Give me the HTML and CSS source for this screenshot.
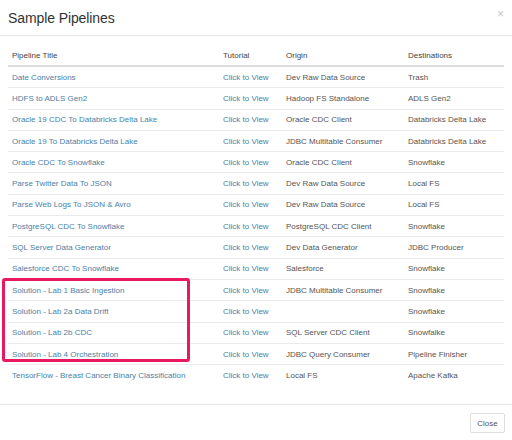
FILE: index.html
```html
<!DOCTYPE html>
<html>
<head>
<meta charset="utf-8">
<link rel="stylesheet" href="styles.css">
</head>
<body>
<div class="modal">
  <div class="modal-header">
    <h1 class="title">Sample Pipelines</h1>
    <span class="close-x">×</span>
  </div>
  <div class="modal-body">
    <table class="grid">
      <colgroup>
        <col class="c1"><col class="c2"><col class="c3"><col class="c4">
      </colgroup>
      <thead>
        <tr><th>Pipeline Title</th><th>Tutorial</th><th>Origin</th><th>Destinations</th></tr>
      </thead>
      <tbody>
        <tr><td class="link">Date Conversions</td><td class="link">Click to View</td><td>Dev Raw Data Source</td><td>Trash</td></tr>
        <tr><td class="link">HDFS to ADLS Gen2</td><td class="link">Click to View</td><td>Hadoop FS Standalone</td><td>ADLS Gen2</td></tr>
        <tr><td class="link">Oracle 19 CDC To Databricks Delta Lake</td><td class="link">Click to View</td><td>Oracle CDC Client</td><td>Databricks Delta Lake</td></tr>
        <tr><td class="link">Oracle 19 To Databricks Delta Lake</td><td class="link">Click to View</td><td>JDBC Multitable Consumer</td><td>Databricks Delta Lake</td></tr>
        <tr><td class="link">Oracle CDC To Snowflake</td><td class="link">Click to View</td><td>Oracle CDC Client</td><td>Snowflake</td></tr>
        <tr><td class="link">Parse Twitter Data To JSON</td><td class="link">Click to View</td><td>Dev Raw Data Source</td><td>Local FS</td></tr>
        <tr><td class="link">Parse Web Logs To JSON &amp; Avro</td><td class="link">Click to View</td><td>Dev Raw Data Source</td><td>Local FS</td></tr>
        <tr><td class="link">PostgreSQL CDC To Snowflake</td><td class="link">Click to View</td><td>PostgreSQL CDC Client</td><td>Snowflake</td></tr>
        <tr><td class="link">SQL Server Data Generator</td><td class="link">Click to View</td><td>Dev Data Generator</td><td>JDBC Producer</td></tr>
        <tr><td class="link">Salesforce CDC To Snowflake</td><td class="link">Click to View</td><td>Salesforce</td><td>Snowflake</td></tr>
        <tr><td class="link">Solution - Lab 1 Basic Ingestion</td><td class="link">Click to View</td><td>JDBC Multitable Consumer</td><td>Snowflake</td></tr>
        <tr><td class="link">Solution - Lab 2a Data Drift</td><td class="link">Click to View</td><td></td><td>Snowflake</td></tr>
        <tr><td class="link">Solution - Lab 2b CDC</td><td class="link">Click to View</td><td>SQL Server CDC Client</td><td>Snowfalke</td></tr>
        <tr><td class="link">Solution - Lab 4 Orchestration</td><td class="link">Click to View</td><td>JDBC Query Consumer</td><td>Pipeline Finisher</td></tr>
        <tr><td class="link">TensorFlow - Breast Cancer Binary Classification</td><td class="link">Click to View</td><td>Local FS</td><td>Apache Kafka</td></tr>
      </tbody>
    </table>
  </div>
  <div class="modal-footer">
    <button class="btn">Close</button>
  </div>
  <div class="highlight"></div>
</div>
</body>
</html>
```

FILE: styles.css
```css
html, body {
  margin: 0;
  padding: 0;
  background: #fff;
}
body {
  font-family: "Liberation Sans", Arial, Helvetica, sans-serif;
  color: #555;
}
.modal {
  position: relative;
  width: 512px;
  height: 440px;
  background: #fff;
}
.modal-header {
  height: 35px;
  border-bottom: 1px solid #e5e5e5;
  display: flex;
  align-items: center;
  justify-content: space-between;
  padding: 0 8px 0 8px;
}
.title {
  margin: 0;
  font-size: 14px;
  font-weight: normal;
  color: #333;
  letter-spacing: -0.1px;
}
.close-x {
  font-size: 12px;
  color: #c8c8c8;
  margin-top: -8px;
}
.modal-body {
  padding: 10px 8px 0 8px;
  height: 358px;
}
.grid {
  width: 496px;
  border-collapse: collapse;
  table-layout: fixed;
  font-size: 8px;
}
.c1 { width: 211px; }
.c2 { width: 63px; }
.c3 { width: 122px; }
.c4 { width: 100px; }
.grid th {
  text-align: left;
  font-weight: normal;
  color: #444;
  height: 19px;
  padding: 0 4px;
  border-bottom: 2px solid #ddd;
  vertical-align: middle;
}
.grid td {
  height: 20.3px;
  padding: 0 4px;
  border-top: 1px solid #eaeaea;
  vertical-align: middle;
  white-space: nowrap;
  overflow: hidden;
  color: #555;
}
.grid tbody tr:first-child td {
  border-top: none;
}
.grid td.link {
  color: #4b7fa6;
}
.modal-footer {
  border-top: 1px solid #e5e5e5;
  display: flex;
  justify-content: flex-end;
  padding: 8px 7px 0 8px;
}
.btn {
  font-family: "Liberation Sans", Arial, sans-serif;
  font-size: 8px;
  color: #555;
  background: #fff;
  border: 1px solid #ddd;
  border-radius: 2px;
  width: 35px;
  height: 20px;
  padding: 0;
}
.highlight {
  position: absolute;
  left: 2px;
  top: 278px;
  width: 182px;
  height: 78px;
  border: 3px solid #e8195e;
  border-radius: 3px;
  pointer-events: none;
}
```
